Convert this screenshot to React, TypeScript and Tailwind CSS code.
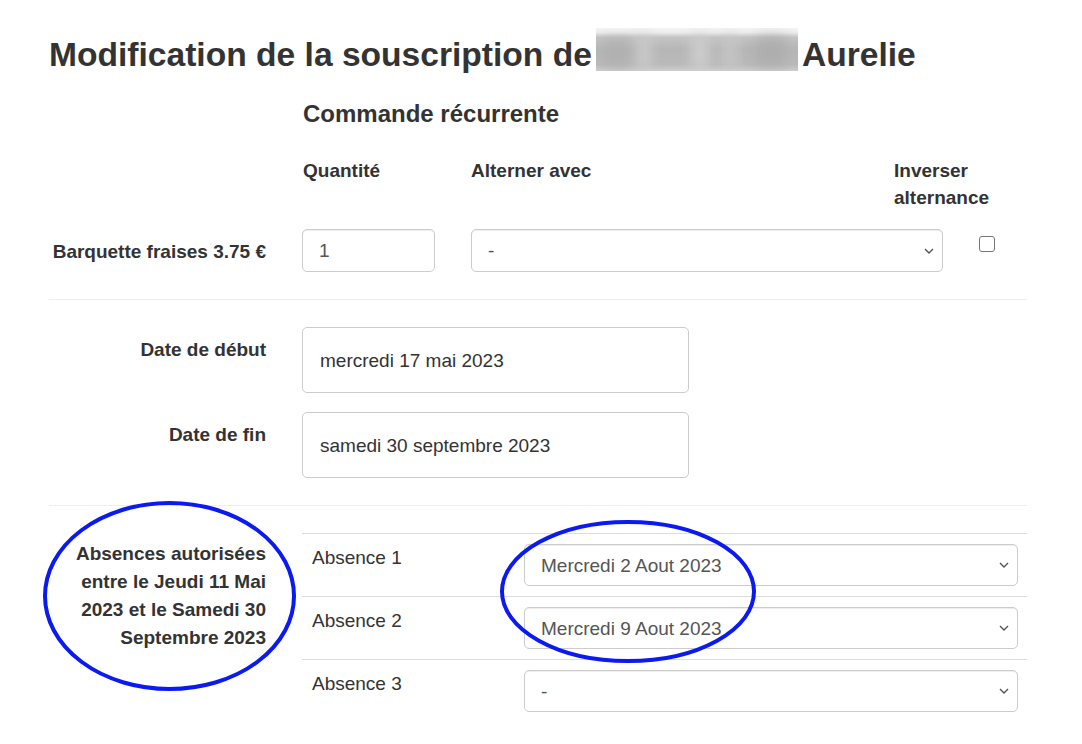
import React from "react";

function Chevron() {
  return (
    <svg
      className="absolute right-[8px] top-1/2 -translate-y-1/2"
      width="10"
      height="6"
      viewBox="0 0 10 6"
      fill="none"
    >
      <path d="M1 1l4 4 4-4" stroke="#555" strokeWidth="1.4" />
    </svg>
  );
}

function FakeSelect({ value, className }: { value: string; className: string }) {
  return (
    <div
      className={`relative flex items-center rounded-[5px] border border-[#ccc] bg-white pl-[16px] text-[#555] shadow-[inset_0_1px_1px_rgba(0,0,0,0.075)] ${className}`}
    >
      <span>{value}</span>
      <Chevron />
    </div>
  );
}

function Redacted() {
  // nom masqué (flou) dans le titre
  return (
    <span className="relative inline-block h-[43px] w-[202px] overflow-hidden bg-[linear-gradient(to_bottom,#f4f4f4_0%,#eeeeee_10%,#c4c4c4_22%,#b6b6b6_50%,#bababa_85%,#cfcfcf_100%)] align-[-5px] ml-[4px] mr-[4px]">
      <span className="absolute left-[40px] top-[8px] h-[34px] w-[14px] bg-[#cdcdcd] blur-[7px]"></span>
      <span className="absolute left-[96px] top-[8px] h-[34px] w-[16px] bg-[#d0d0d0] blur-[7px]"></span>
      <span className="absolute left-[128px] top-[8px] h-[34px] w-[12px] bg-[#c9c9c9] blur-[7px]"></span>
      <span className="absolute left-[160px] top-[10px] h-[28px] w-[30px] bg-[#adadad] blur-[7px]"></span>
      <span className="absolute left-[8px] top-[12px] h-[26px] w-[26px] bg-[#b0b0b0] blur-[7px]"></span>
    </span>
  );
}

const absences = [
  { label: "Absence 1", value: "Mercredi 2 Aout 2023" },
  { label: "Absence 2", value: "Mercredi 9 Aout 2023" },
  { label: "Absence 3", value: "-" },
];

export default function App() {
  return (
    <div className="relative min-h-[744px] w-[1082px] overflow-hidden bg-white font-['Liberation_Sans',Arial,sans-serif] text-[19px] leading-[27px] text-[#333]">
      <div className="pl-[49px] pr-[55px] pt-[28px]">
        <h1 className="text-[33.6px] font-bold leading-[37px]">
          Modification de la souscription de
          <Redacted />
          Aurelie
        </h1>

        <h3 className="ml-[254px] mt-[27px] text-[24px] font-bold leading-[27px]">
          Commande récurrente
        </h3>

        {/* entetes */}
        <div className="ml-[254px] mt-[30px] flex font-bold">
          <div className="w-[168px]">Quantité</div>
          <div className="w-[423px]">Alterner avec</div>
          <div className="w-[133px]">Inverser alternance</div>
        </div>

        <div className="mt-[18px] flex">
          <div className="w-[217px] pt-[9px] text-right font-bold">Barquette fraises 3.75 €</div>
          <div className="ml-[36px] flex h-[43px] w-[133px] items-center rounded-[5px] border border-[#ccc] pl-[16px] text-[#555] shadow-[inset_0_1px_1px_rgba(0,0,0,0.075)]">
            1
          </div>
          <FakeSelect value="-" className="ml-[36px] h-[43px] w-[472px]" />
          <div className="ml-[36px] mt-[7px] h-[16px] w-[16px] rounded-[3px] border-[1.5px] border-[#767676]"></div>
        </div>

        <div className="my-[27px] border-t border-[#eee]"></div>

        <div className="flex flex-col gap-[19px]">
          <div className="flex">
            <div className="w-[217px] pt-[9px] text-right font-bold">Date de début</div>
            <div className="ml-[36px] flex h-[66px] w-[387px] items-center rounded-[5px] border border-[#ccc] pl-[17px]">
              mercredi 17 mai 2023
            </div>
          </div>
          <div className="flex">
            <div className="w-[217px] pt-[9px] text-right font-bold">Date de fin</div>
            <div className="ml-[36px] flex h-[66px] w-[387px] items-center rounded-[5px] border border-[#ccc] pl-[17px]">
              samedi 30 septembre 2023
            </div>
          </div>
        </div>

        <div className="mb-[27px] mt-[27px] border-t border-[#eee]"></div>

        <div className="flex">
          <div className="w-[217px] pt-[7px] text-right font-bold leading-[28px]">
            Absences autorisées entre le Jeudi 11 Mai 2023 et le Samedi 30 Septembre 2023
          </div>
          <div className="ml-[36px] flex-1">
            {absences.map((a) => (
              <div key={a.label} className="flex border-t border-[#ddd] py-[10px]">
                <div className="w-[222px] pl-[10px]">{a.label}</div>
                <FakeSelect value={a.value} className="h-[42px] w-[494px]" />
              </div>
            ))}
          </div>
        </div>
      </div>

      {/* annotations */}
      <svg className="pointer-events-none absolute left-0 top-0" width="1082" height="744">
        <ellipse cx="169.5" cy="596" rx="124.5" ry="93" fill="none" stroke="#0a1af0" strokeWidth="4" />
        <ellipse cx="628" cy="591.5" rx="126" ry="69.5" fill="none" stroke="#0a1af0" strokeWidth="4" />
      </svg>
    </div>
  );
}
